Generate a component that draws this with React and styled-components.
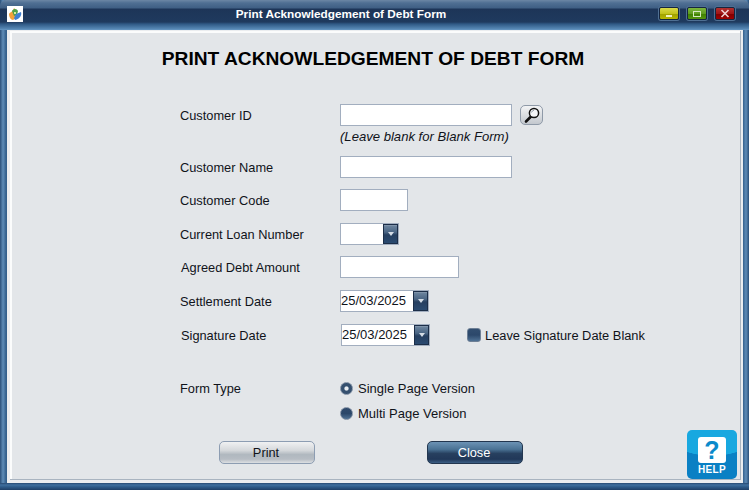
import React from "react";
import styled, { createGlobalStyle } from "styled-components";

const Global = createGlobalStyle`
  html, body { margin: 0; padding: 0; background: #3d6288; }
  * { box-sizing: border-box; }
`;

const Win = styled.div`
  position: relative;
  width: 749px;
  height: 490px;
  display: flex;
  flex-direction: column;
  overflow: hidden;
  font-family: "Liberation Sans", Arial, sans-serif;
  font-size: 12.8px;
  color: #10131a;
  background: linear-gradient(90deg, #2a4f78 0, #5f8db8 3px, #34608c 6px, #34608c 743px, #5f8db8 746px, #2a4f78 749px);
`;

const BottomEdge = styled.div`
  position: absolute;
  left: 0;
  right: 0;
  bottom: 0;
  height: 7px;
  background: linear-gradient(180deg, #274a72 0, #3f6f9e 2px, #2d5a88 4px, #1f3f66 7px);
`;

const TitleBar = styled.div`
  height: 30px;
  flex: none;
  display: flex;
  align-items: center;
  padding: 0 14px 3px 7px;
  border-radius: 6px 6px 0 0;
  background: linear-gradient(180deg, #6c87a5 0, #4f6f93 3px, #3f5f84 8px, #1d3558 9px, #1f3a5e 22px, #2f5985 24px, #5788b5 29px, #6a9ac5 30px);
`;

const AppIcon = styled.div`
  width: 16px;
  height: 16px;
  flex: none;
  background: #fff;
  display: flex;
`;

const TitleText = styled.div`
  flex: 1;
  text-align: center;
  color: #fff;
  font-weight: bold;
  font-size: 11.8px;
  white-space: nowrap;
`;

const WinControls = styled.div`
  display: flex;
  gap: 8px;
`;

const WinButton = styled.div`
  width: 20px;
  height: 13px;
  display: flex;
  align-items: center;
  justify-content: center;
  border-radius: 2px;
  border: 1px solid #16263f;
  box-shadow: 0 0 0 1px #4f6f93;
  background: ${(p) => p.$bg};
`;

const Body = styled.div`
  flex: 1;
  display: flex;
  padding: 0 6px 7px 7px;
  min-height: 0;
  position: relative;
`;

const Panel = styled.div`
  flex: 1;
  display: flex;
  position: relative;
  z-index: 1;
  padding: 1px 2px 3px 3px;
  background: #ebedef;
`;

const Inner = styled.div`
  flex: 1;
  position: relative;
  background: #e3e6e9;
  border-right: 1px solid #a9b4c0;
  border-bottom: 1px solid #a9b4c0;
  box-shadow: inset 2px 2px 0 #fbfcfc;
  padding-top: 18px;
  display: flex;
  flex-direction: column;
`;

const Heading = styled.h1`
  margin: 0 0 35px;
  padding-right: 4px;
  text-align: center;
  font-size: 19.2px;
  line-height: 20px;
  font-weight: bold;
  color: #000;
  white-space: nowrap;
`;

const Form = styled.div`
  padding-left: 170px;
  display: flex;
  flex-direction: column;
`;

const Row = styled.div`
  display: grid;
  grid-template-columns: 160px 1fr;
  align-items: center;
  min-height: 22px;
  margin-top: ${(p) => p.$top || 0}px;
  padding-left: ${(p) => p.$shift || 0}px;
`;

const Label = styled.label`
  line-height: 22px;
  padding-left: ${(p) => p.$indent || 0}px;
  transform: translateY(1px);
`;

const Controls = styled.div`
  display: flex;
  align-items: center;
`;

const Input = styled.div`
  width: ${(p) => p.$w}px;
  height: 22px;
  background: #fff;
  border: 1px solid #a2aebf;
`;

const Hint = styled.div`
  font-style: italic;
  font-size: 13.1px;
  line-height: 16px;
  margin-top: 3px;
  padding-left: 160px;
`;

const LookupBtn = styled.div`
  width: 23px;
  height: 20px;
  margin-left: 8px;
  border-radius: 5px;
  border: 1px solid #8f9aa8;
  background: linear-gradient(180deg, #f3f4f5, #c3c8ce);
  display: flex;
  align-items: center;
  justify-content: center;
`;

const Combo = styled.div`
  display: flex;
  height: 22px;
  border: 1px solid #a2aebf;
  background: #fff;
`;

const ComboText = styled.div`
  width: ${(p) => p.$w}px;
  line-height: 20px;
  font-size: 13px;
  white-space: nowrap;
`;

const ComboBtn = styled.div`
  width: 15px;
  border: 1px solid #1c2e48;
  box-shadow: inset 0 1px 0 #7f93aa;
  background: linear-gradient(180deg, #6f87a0 0, #4a6584 40%, #263f60 55%, #2a4a70 100%);
  display: flex;
  align-items: center;
  justify-content: center;
  &::after {
    content: "";
    border-left: 3.5px solid transparent;
    border-right: 3.5px solid transparent;
    border-top: 4px solid #d5dde6;
  }
`;

const Check = styled.div`
  width: 14px;
  height: 14px;
  border-radius: 3px;
  flex: none;
  border: 1px solid #6d7f95;
  background: linear-gradient(180deg, #324e70, #2c486b 50%, #4f7194);
  margin: 0 4px 0 37px;
`;

const CheckLabel = styled.span`
  font-size: 12.85px;
`;

const OptionRow = styled.div`
  display: flex;
  align-items: center;
  gap: 5px;
  font-size: 13px;
`;

const Radio = styled.div`
  width: 13px;
  height: 13px;
  border-radius: 50%;
  border: 1px solid #7f8ea2;
  background: ${(p) => p.$on
    ? "radial-gradient(circle, #e8edf2 0 1.6px, #35506f 2.6px)"
    : "linear-gradient(180deg, #2f4a6c, #2b4769 50%, #4f7194)"};
`;

const Actions = styled.div`
  display: flex;
  gap: 112px;
  padding-left: 209px;
  margin-top: 17px;
`;

const ActionBtn = styled.div`
  width: 96px;
  height: 23px;
  border-radius: 5px;
  text-align: center;
  line-height: 22px;
  padding-right: 2px;
  border: 1px solid ${(p) => (p.$dark ? "#22364f" : "#8d9db2")};
  color: ${(p) => (p.$dark ? "#fff" : "#10131a")};
  background: ${(p) => p.$dark
    ? "linear-gradient(180deg, #6c93b5 0, #4a7294 35%, #27405f 55%, #213859 82%, #3c5f85 100%)"
    : "linear-gradient(180deg, #f0f1f2 0, #d5d8db 40%, #b0b8bf 60%, #b7bdc4 82%, #dde0e3 100%)"};
`;

const Help = styled.div`
  position: absolute;
  right: 3px;
  bottom: 0;
  width: 50px;
  height: 49px;
  border-radius: 5px;
  background: radial-gradient(ellipse 48px 26px at 50% 0, #18a8e0 0 98%, #0a80c4 100%);
  display: flex;
  flex-direction: column;
  align-items: center;
  padding-top: 7px;
  color: #fff;
`;

const HelpCard = styled.div`
  width: 28px;
  height: 26px;
  border-radius: 3px;
  background: #fff;
  color: #0b8acb;
  font-weight: bold;
  font-size: 25px;
  line-height: 26px;
  text-align: center;
`;

const HelpText = styled.div`
  font-weight: bold;
  font-size: 10px;
  line-height: 11px;
  margin-top: 1px;
  letter-spacing: 0.3px;
`;

const Spacer = styled.div`
  height: ${(p) => p.$h}px;
`;

export default function App() {
  return (
    <Win>
      <Global />
      <BottomEdge />
      <TitleBar>
        <AppIcon>
          <svg width="16" height="16" viewBox="0 0 16 16">
            <path d="M2 8 C3 6 6 6 7 2 L9 4 L9 12 L6 14 C4 14 2 11 2 8Z" fill="#f3a13a" />
            <path d="M5 5 C7 2 10 3 11 5 L10 9 L7 10Z" fill="#4fa04a" />
            <path d="M9 8 L14 6 C15 9 13 13 8 14 L7 12Z" fill="#3f7fd0" />
            <rect x="7" y="6" width="2" height="2" fill="#d8e89a" />
          </svg>
        </AppIcon>
        <TitleText>Print Acknowledgement of Debt Form</TitleText>
        <WinControls>
          <WinButton $bg="linear-gradient(180deg,#d9d94a 0,#c3c31c 50%,#a0a000 55%,#b8b800 100%)">
            <svg width="8" height="8"><rect x="1" y="5" width="6" height="2" fill="#eef0c0" /></svg>
          </WinButton>
          <WinButton $bg="linear-gradient(180deg,#7cb53c 0,#5f9c20 50%,#3f8000 55%,#559510 100%)">
            <svg width="10" height="8"><rect x="1.5" y="1.5" width="7" height="5" fill="none" stroke="#d5e8c0" /></svg>
          </WinButton>
          <WinButton $bg="linear-gradient(180deg,#b03030 0,#a01515 50%,#800000 55%,#a00000 100%)">
            <svg width="10" height="9"><path d="M1.5 1 L8.5 8 M8.5 1 L1.5 8" stroke="#f0d0d0" strokeWidth="1.6" /></svg>
          </WinButton>
        </WinControls>
      </TitleBar>
      <Body>
        <Panel>
          <Inner>
            <Heading>PRINT ACKNOWLEDGEMENT OF DEBT FORM</Heading>
            <Form>
              <Row>
                <Label>Customer ID</Label>
                <Controls>
                  <Input $w={172} />
                  <LookupBtn>
                    <svg width="18" height="18" viewBox="0 0 18 18">
                      <path d="M3 15.5 L8 10.5" stroke="#111" strokeWidth="2.6" strokeLinecap="round" />
                      <circle cx="11" cy="7" r="4.6" fill="#f4f6f8" stroke="#111" strokeWidth="1.5" />
                      <path d="M8.5 6.5 A3 3 0 0 1 11 4.3" fill="none" stroke="#9aa4ae" />
                    </svg>
                  </LookupBtn>
                </Controls>
              </Row>
              <Hint>(Leave blank for Blank Form)</Hint>
              <Row $top={11}>
                <Label>Customer Name</Label>
                <Controls><Input $w={172} /></Controls>
              </Row>
              <Row $top={11}>
                <Label>Customer Code</Label>
                <Controls><Input $w={68} /></Controls>
              </Row>
              <Row $top={12}>
                <Label>Current Loan Number</Label>
                <Controls>
                  <Combo><ComboText $w={42} /><ComboBtn /></Combo>
                </Controls>
              </Row>
              <Row $top={11}>
                <Label $indent={1}>Agreed Debt Amount</Label>
                <Controls><Input $w={119} /></Controls>
              </Row>
              <Row $top={12}>
                <Label>Settlement Date</Label>
                <Controls>
                  <Combo><ComboText $w={72}>25/03/2025</ComboText><ComboBtn /></Combo>
                </Controls>
              </Row>
              <Row $top={12} $shift={1}>
                <Label>Signature Date</Label>
                <Controls>
                  <Combo><ComboText $w={72}>25/03/2025</ComboText><ComboBtn /></Combo>
                  <Check />
                  <CheckLabel>Leave Signature Date Blank</CheckLabel>
                </Controls>
              </Row>
              <Spacer $h={31} />
              <Row>
                <Label>Form Type</Label>
                <OptionRow><Radio $on /><span>Single Page Version</span></OptionRow>
              </Row>
              <Row $top={3}>
                <span />
                <OptionRow><Radio /><span>Multi Page Version</span></OptionRow>
              </Row>
            </Form>
            <Actions>
              <ActionBtn>Print</ActionBtn>
              <ActionBtn $dark>Close</ActionBtn>
            </Actions>
            <Help>
              <HelpCard>?</HelpCard>
              <HelpText>HELP</HelpText>
            </Help>
          </Inner>
        </Panel>
      </Body>
    </Win>
  );
}
